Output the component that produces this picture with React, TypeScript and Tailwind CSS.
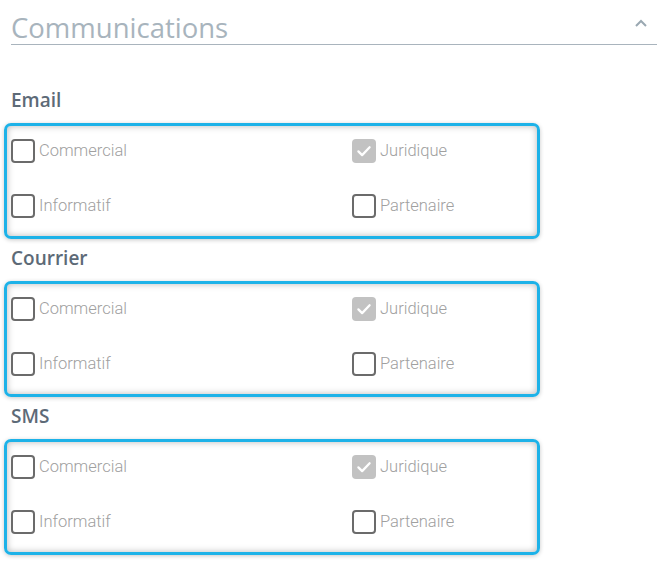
import React from "react";

function Box({ checked }: { checked?: boolean }) {
  if (checked) {
    return (
      <span className="flex h-[24px] w-[24px] shrink-0 items-center justify-center rounded-[4px] bg-[#c2c2c2]">
        <svg width="18" height="18" viewBox="0 0 24 24" fill="none" stroke="white" strokeWidth="3" strokeLinecap="round" strokeLinejoin="round">
          <path d="M4.5 12.5l5 5L19.5 7" />
        </svg>
      </span>
    );
  }
  return <span className="block h-[24px] w-[24px] shrink-0 rounded-[4px] border-2 border-[#6b6b6b] bg-white" />;
}

function Item({ label, checked }: { label: string; checked?: boolean }) {
  return (
    <div className="flex h-[28px] items-center gap-[4px]">
      <Box checked={checked} />
      <span className="text-[16.5px] leading-none text-[#a0a0a0]" style={{ fontFamily: "Roboto, sans-serif", fontWeight: 300 }}>
        {label}
      </span>
    </div>
  );
}

function Group({ title }: { title: string }) {
  return (
    <div>
      <div
        className="flex h-[42px] items-center pb-[4px] pl-[11px] text-[19px] font-semibold text-[#5d6a77]"
        style={{ fontFamily: "'Open Sans', sans-serif" }}
      >
        {title}
      </div>
      <div className="ml-[4px] w-[536px] rounded-[7px] border-[3px] border-[#1db2e8] pt-[11px] pb-[16px] pl-[4px] shadow-[inset_0_0_7px_rgba(0,0,0,0.28),0_1px_4px_rgba(0,0,0,0.22)]">
        <div className="grid grid-cols-[341px_1fr] gap-y-[27px]">
          <Item label="Commercial" />
          <Item label="Juridique" checked />
          <Item label="Informatif" />
          <Item label="Partenaire" />
        </div>
      </div>
    </div>
  );
}

export default function App() {
  return (
    <div className="h-[562px] w-[664px] overflow-hidden bg-white">
      <div className="mx-[11px] mr-[7px] flex h-[45px] items-end justify-between border-b border-[#a9b4bd] pb-[3px]">
        <span className="text-[27.5px] leading-none text-[#a8b4bd]" style={{ fontFamily: "'Open Sans', sans-serif" }}>
          Communications
        </span>
        <svg className="mb-[14px] mr-[10px]" width="12" height="8" viewBox="0 0 12 8" fill="none" stroke="#9aa8b2" strokeWidth="2">
          <path d="M1 7l5-5 5 5" />
        </svg>
      </div>
      <div className="pt-[36px]">
        <Group title="Email" />
        <Group title="Courrier" />
        <Group title="SMS" />
      </div>
    </div>
  );
}
